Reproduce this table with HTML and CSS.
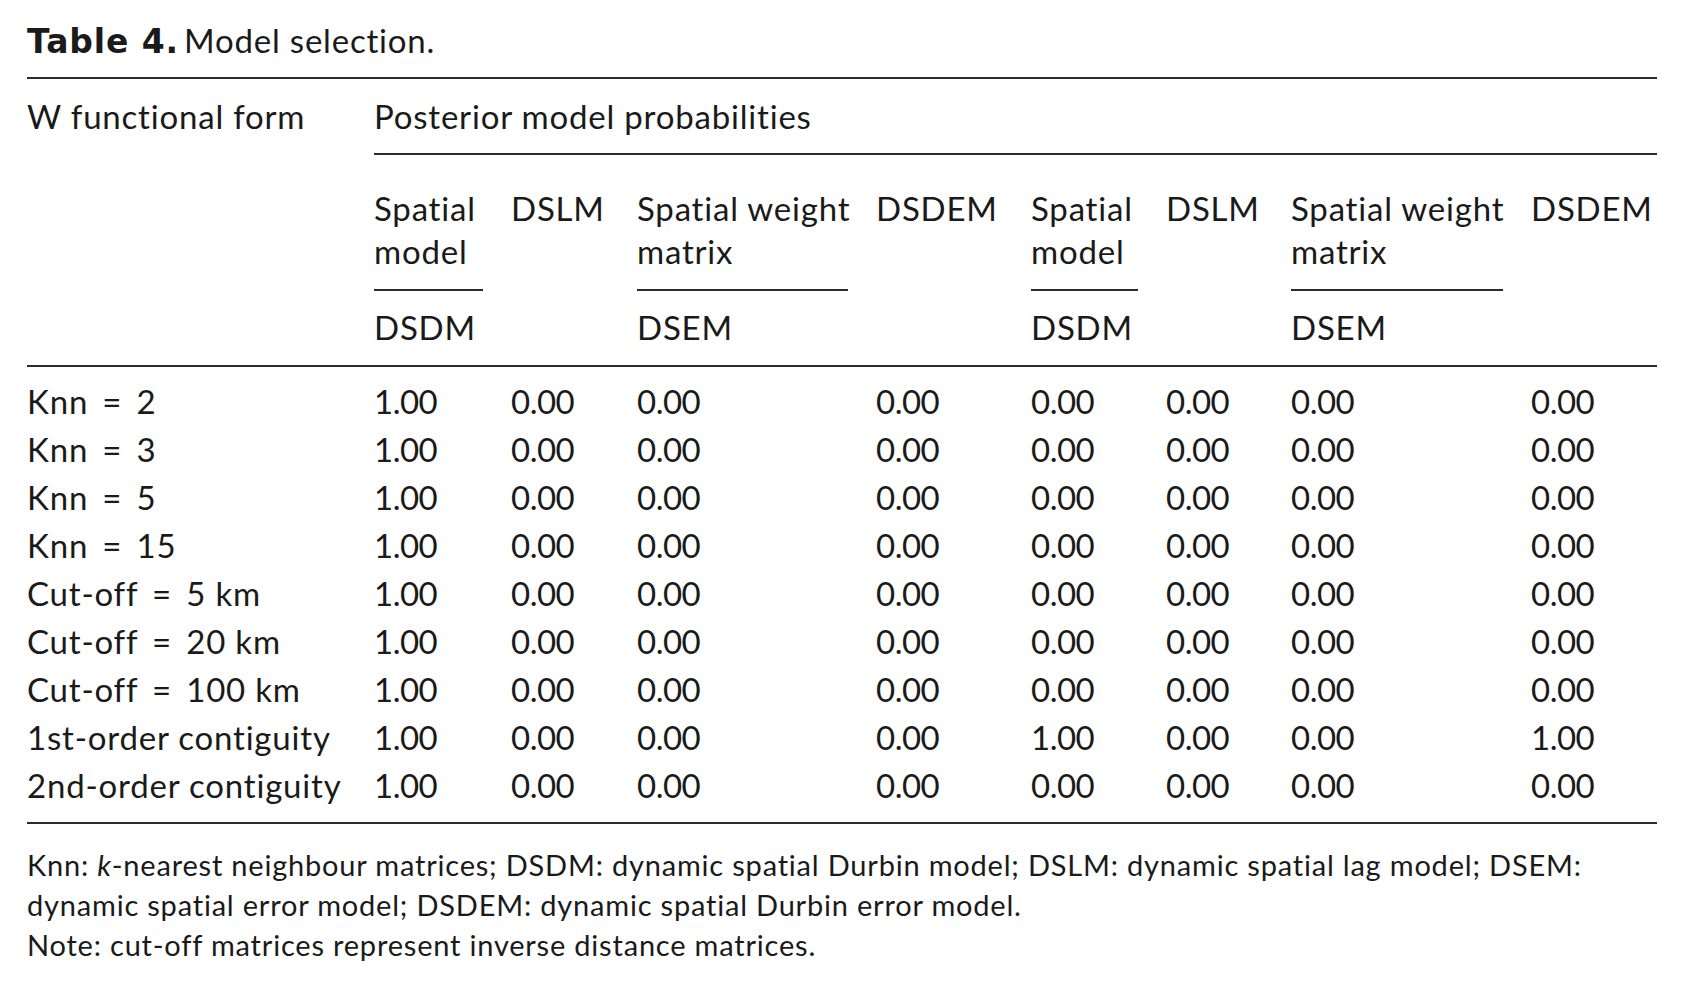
FILE: index.html
```html
<!DOCTYPE html>
<html lang="en">
<head>
<meta charset="utf-8">
<title>Table 4. Model selection.</title>
<link rel="stylesheet" href="styles.css">
</head>
<body>
<div class="page">
  <div class="caption"><span class="cap-label">Table 4.</span><span class="cap-text">Model selection.</span></div>
  <table class="model-table">
    <colgroup>
      <col class="c0"><col class="c1"><col class="c2"><col class="c3"><col class="c4"><col class="c5"><col class="c6"><col class="c7"><col class="c8">
    </colgroup>
    <thead>
      <tr class="head-1">
        <th>W functional form</th>
        <th colspan="8" class="span-head">Posterior model probabilities</th>
      </tr>
      <tr class="head-2">
        <th></th>
        <th><div class="stack">Spatial<br>model</div><div class="sub">DSDM</div></th>
        <th>DSLM</th>
        <th><div class="stack">Spatial weight<br>matrix</div><div class="sub">DSEM</div></th>
        <th>DSDEM</th>
        <th><div class="stack">Spatial<br>model</div><div class="sub">DSDM</div></th>
        <th>DSLM</th>
        <th><div class="stack">Spatial weight<br>matrix</div><div class="sub">DSEM</div></th>
        <th>DSDEM</th>
      </tr>
    </thead>
    <tbody>
      <tr><td>Knn <span class="eq">=</span> 2</td><td>1.00</td><td>0.00</td><td>0.00</td><td>0.00</td><td>0.00</td><td>0.00</td><td>0.00</td><td>0.00</td></tr>
      <tr><td>Knn <span class="eq">=</span> 3</td><td>1.00</td><td>0.00</td><td>0.00</td><td>0.00</td><td>0.00</td><td>0.00</td><td>0.00</td><td>0.00</td></tr>
      <tr><td>Knn <span class="eq">=</span> 5</td><td>1.00</td><td>0.00</td><td>0.00</td><td>0.00</td><td>0.00</td><td>0.00</td><td>0.00</td><td>0.00</td></tr>
      <tr><td>Knn <span class="eq">=</span> 15</td><td>1.00</td><td>0.00</td><td>0.00</td><td>0.00</td><td>0.00</td><td>0.00</td><td>0.00</td><td>0.00</td></tr>
      <tr><td>Cut-off <span class="eq">=</span> 5 km</td><td>1.00</td><td>0.00</td><td>0.00</td><td>0.00</td><td>0.00</td><td>0.00</td><td>0.00</td><td>0.00</td></tr>
      <tr><td>Cut-off <span class="eq">=</span> 20 km</td><td>1.00</td><td>0.00</td><td>0.00</td><td>0.00</td><td>0.00</td><td>0.00</td><td>0.00</td><td>0.00</td></tr>
      <tr><td>Cut-off <span class="eq">=</span> 100 km</td><td>1.00</td><td>0.00</td><td>0.00</td><td>0.00</td><td>0.00</td><td>0.00</td><td>0.00</td><td>0.00</td></tr>
      <tr><td>1st-order contiguity</td><td>1.00</td><td>0.00</td><td>0.00</td><td>0.00</td><td>1.00</td><td>0.00</td><td>0.00</td><td>1.00</td></tr>
      <tr><td>2nd-order contiguity</td><td>1.00</td><td>0.00</td><td>0.00</td><td>0.00</td><td>0.00</td><td>0.00</td><td>0.00</td><td>0.00</td></tr>
    </tbody>
  </table>
  <div class="notes">
    <div class="note-line">Knn: <i>k</i>-nearest neighbour matrices; DSDM: dynamic spatial Durbin model; DSLM: dynamic spatial lag model; DSEM:</div>
    <div class="note-line">dynamic spatial error model; DSDEM: dynamic spatial Durbin error model.</div>
    <div class="note-line">Note: cut-off matrices represent inverse distance matrices.</div>
  </div>
</div>
</body>
</html>
```

FILE: styles.css
```css
html, body {
  margin: 0;
  padding: 0;
  background: #ffffff;
}

body {
  font-family: Lato, "Open Sans", "DejaVu Sans", sans-serif;
  color: #1a1a1a;
  font-size: 33px;
  letter-spacing: 0.8px;
}

.page {
  padding-left: 27px;
  width: 1630px;
}

.caption {
  padding-top: 20px;
  padding-bottom: 17px;
  line-height: 40px;
  height: 40px;
  white-space: nowrap;
}

.cap-label {
  font-family: "DejaVu Sans", Lato, sans-serif;
  font-weight: 700;
  letter-spacing: 0.9px;
}

.cap-text {
  margin-left: 5px;
}

.model-table {
  width: 1630px;
  table-layout: fixed;
  border-collapse: separate;
  border-spacing: 0;
  border-top: 2px solid #2b2b2b;
}

.c0 { width: 347px; }
.c1 { width: 137px; }
.c2 { width: 126px; }
.c3 { width: 239px; }
.c4 { width: 155px; }
.c5 { width: 135px; }
.c6 { width: 125px; }
.c7 { width: 240px; }
.c8 { width: 126px; }

.model-table th,
.model-table td {
  font-weight: 400;
  text-align: left;
  vertical-align: top;
  padding: 0 28px 0 0;
  white-space: nowrap;
}

.head-1 th {
  padding-top: 15px;
  padding-bottom: 15px;
  line-height: 44px;
}

.head-1 .span-head {
  border-bottom: 2px solid #2b2b2b;
}

.head-2 th {
  padding-top: 32px;
  padding-bottom: 16px;
  line-height: 43px;
  border-bottom: 2px solid #2b2b2b;
}

.stack {
  padding-bottom: 16px;
  border-bottom: 2px solid #2b2b2b;
}

.sub {
  padding-top: 15px;
}

.model-table tbody td {
  line-height: 48px;
}

.model-table tbody td + td {
  letter-spacing: -0.5px;
}

.eq {
  margin: 0 5px;
}

.model-table tbody tr:first-child td {
  padding-top: 10px;
}

.model-table tbody tr:last-child td {
  padding-bottom: 13px;
  border-bottom: 2px solid #2b2b2b;
}

.notes {
  margin-top: 21px;
  font-size: 29px;
  line-height: 40px;
  letter-spacing: 0.8px;
}

.note-line {
  white-space: nowrap;
}
```
